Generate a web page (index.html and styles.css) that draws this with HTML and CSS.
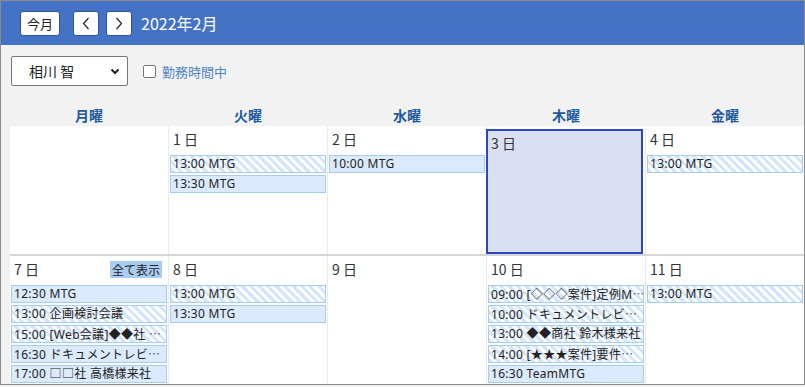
FILE: index.html
```html
<!DOCTYPE html>
<html lang="ja">
<head>
  <meta charset="UTF-8">
  <meta name="viewport" content="width=device-width, initial-scale=1.0">
  <title>スケジュール</title>
  <link rel="stylesheet" href="styles.css">
</head>
<body>

<div class="app">
  <div class="topbar">
    <button class="btn btn-today">今月</button>
    <button class="btn btn-nav" aria-label="前月">
      <svg width="8" height="13" viewBox="0 0 8 13"><polyline points="6.5,1 1.5,6.5 6.5,12" fill="none" stroke="#222" stroke-width="1.2"/></svg>
    </button>
    <button class="btn btn-nav" aria-label="次月">
      <svg width="8" height="13" viewBox="0 0 8 13"><polyline points="1.5,1 6.5,6.5 1.5,12" fill="none" stroke="#222" stroke-width="1.2"/></svg>
    </button>
    <div class="month-title">2022年2月</div>
  </div>

  <div class="filters">
    <div class="select">
      <span>相川 智</span>
      <svg width="10" height="7" viewBox="0 0 10 7"><polyline points="1.5,1.5 5,5 8.5,1.5" fill="none" stroke="#222" stroke-width="2"/></svg>
    </div>
    <label class="check">
      <span class="box"></span>
      勤務時間中
    </label>
  </div>

  <div class="weekdays">
    <div>月曜</div>
    <div>火曜</div>
    <div>水曜</div>
    <div>木曜</div>
    <div>金曜</div>
  </div>

  <div class="week">
    <div class="cell"></div>
    <div class="cell">
      <div class="day">1 日</div>
      <div class="ev striped">13:00 MTG</div>
      <div class="ev">13:30 MTG</div>
    </div>
    <div class="cell">
      <div class="day">2 日</div>
      <div class="ev">10:00 MTG</div>
    </div>
    <div class="cell">
      <div class="today">
        <div class="day">3 日</div>
      </div>
    </div>
    <div class="cell">
      <div class="day">4 日</div>
      <div class="ev striped">13:00 MTG</div>
    </div>
  </div>

  <div class="week">
    <div class="cell">
      <div class="day">7 日 <span class="more">全て表示</span></div>
      <div class="ev">12:30 MTG</div>
      <div class="ev striped">13:00 企画検討会議</div>
      <div class="ev striped">15:00 [Web会議]◆◆社 <span class="dots">…</span></div>
      <div class="ev">16:30 ドキュメントレビ<span class="dots">…</span></div>
      <div class="ev">17:00 □□社 高橋様来社</div>
    </div>
    <div class="cell">
      <div class="day">8 日</div>
      <div class="ev striped">13:00 MTG</div>
      <div class="ev">13:30 MTG</div>
    </div>
    <div class="cell">
      <div class="day">9 日</div>
    </div>
    <div class="cell">
      <div class="day">10 日</div>
      <div class="ev striped">09:00 [◇◇◇案件]定例M<span class="dots">…</span></div>
      <div class="ev striped">10:00 ドキュメントレビ<span class="dots">…</span></div>
      <div class="ev striped">13:00 ◆◆商社 鈴木様来社</div>
      <div class="ev striped">14:00 [★★★案件]要件<span class="dots">…</span></div>
      <div class="ev">16:30 TeamMTG</div>
    </div>
    <div class="cell">
      <div class="day">11 日</div>
      <div class="ev striped">13:00 MTG</div>
    </div>
  </div>
</div>

</body>
</html>
```

FILE: styles.css
```css
body {
  margin: 0;
  font-family: "Noto Sans CJK JP", "Noto Sans", sans-serif;
  background-color: #f2f2f2;
  color: #333;
}

.app {
  width: 805px;
  height: 385px;
  box-sizing: border-box;
  border: 1px solid #8a8a8a;
  background-color: #f2f2f2;
  overflow: hidden;
}

.topbar {
  height: 44px;
  background-color: #4472c4;
  display: flex;
  align-items: center;
  padding-left: 19px;
}

.btn {
  height: 25px;
  margin: 0;
  padding: 0;
  background: #fff;
  border: 1px solid #2f5597;
  border-radius: 3px;
  font-family: inherit;
  font-size: 13px;
  color: #222;
  display: flex;
  align-items: center;
  justify-content: center;
  cursor: pointer;
}

.btn-today {
  width: 40px;
  margin-right: 13px;
}

.btn-nav {
  width: 26px;
  margin-right: 7px;
}

.month-title {
  color: #fff;
  font-size: 16px;
  margin-left: 2px;
}

.filters {
  display: flex;
  align-items: center;
  padding: 11px 0 0 10px;
  height: 30px;
}

.select {
  width: 117px;
  height: 30px;
  box-sizing: border-box;
  border: 1px solid #767676;
  border-radius: 2px;
  background: #fff;
  display: flex;
  align-items: center;
  justify-content: space-between;
  padding: 0 7px 0 17px;
  font-size: 14px;
  color: #222;
}

.check {
  display: flex;
  align-items: center;
  margin-left: 15px;
  font-size: 13px;
  color: #4f86c6;
}

.check .box {
  width: 13px;
  height: 13px;
  box-sizing: border-box;
  border: 1px solid #767676;
  border-radius: 2px;
  background: #fff;
  margin-right: 6px;
}

.weekdays {
  display: grid;
  grid-template-columns: repeat(5, 158px);
  column-gap: 1px;
  margin: 18px 0 0 9px;
  height: 22px;
  line-height: 22px;
  text-align: center;
  font-size: 14px;
  font-weight: bold;
  color: #1e5b9c;
}

.week {
  display: grid;
  grid-template-columns: repeat(5, 158px);
  column-gap: 1px;
  margin-left: 9px;
  height: 128px;
  background-color: #ebebeb;
}

.week + .week {
  border-top: 2px solid #d6d6d6;
}

.cell {
  background: #fff;
  padding: 0 1px;
  display: flex;
  flex-direction: column;
  gap: 2px;
  min-width: 0;
}

.day {
  height: 27px;
  line-height: 26px;
  padding: 0 5px 0 3px;
  font-size: 14px;
  color: #333;
  display: flex;
  justify-content: space-between;
  align-items: flex-start;
}

.more {
  margin-top: 5px;
  height: 17px;
  line-height: 17px;
  padding: 0 2px;
  background-color: #a9cdf1;
  font-size: 12px;
  color: #222;
}

.ev {
  height: 18px;
  box-sizing: border-box;
  border: 1px solid #a6cdef;
  background-color: #dbeafc;
  padding: 0 0 0 2px;
  font-family: "Noto Sans", "Noto Sans CJK JP", sans-serif;
  font-size: 12px;
  letter-spacing: 0.3px;
  line-height: 16px;
  color: #222;
  white-space: nowrap;
  overflow: hidden;
}

.ev.striped {
  background: repeating-linear-gradient(45deg, #d3e6fb 0 3px, #fff 3px 6px);
}

.dots {
  font-family: "Noto Sans CJK JP", sans-serif;
  color: #555;
}

.today {
  flex: 1;
  margin: 3px 1px 0 -2px;
  border: 2px solid #2e46c2;
  background-color: #dae0f3;
}

.today .day {
  padding-left: 3px;
  line-height: 24px;
}
```
